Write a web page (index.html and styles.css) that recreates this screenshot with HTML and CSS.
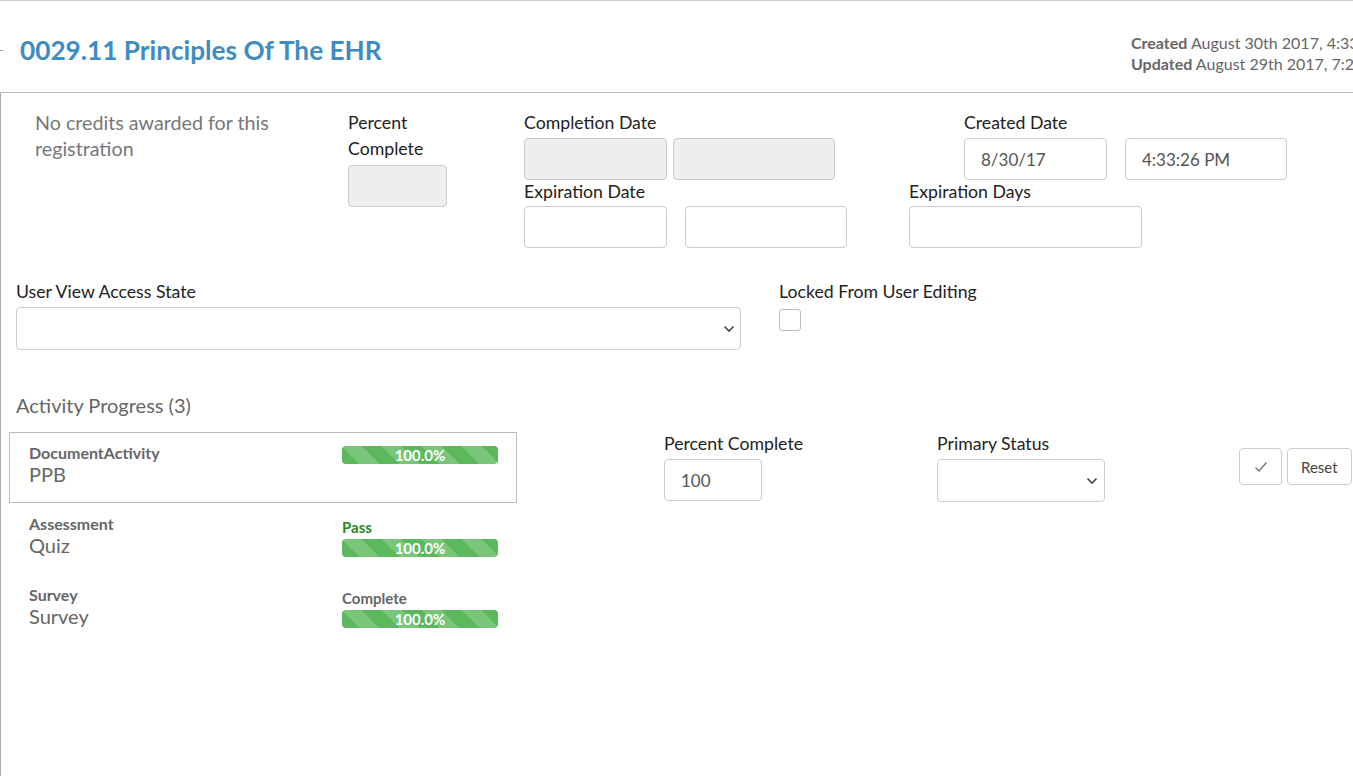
FILE: index.html
```html
<!DOCTYPE html>
<html lang="en">
<head>
    <meta charset="UTF-8">
    <title>0029.11 Principles Of The EHR</title>
    <link rel="stylesheet" href="styles.css">
</head>
<body>
    <div class="panel">
        <div class="panel-header">
            <span class="back-tick"></span>
            <h1 class="title">0029.11 Principles Of The EHR</h1>
            <div class="meta">
                <div><b>Created</b> August 30th 2017, 4:33:26 PM</div>
                <div><b>Updated</b> August 29th 2017, 7:21:04 PM</div>
            </div>
        </div>

        <div class="panel-body">
            <!-- registration fields -->
            <div class="reg-row">
                <div class="col-credits">No credits awarded for this registration</div>

                <div class="col-percent">
                    <label class="label label-wrap">Percent Complete</label>
                    <input class="field field-percent" type="text" disabled>
                </div>

                <div class="col-dates">
                    <label class="label">Completion Date</label>
                    <div class="field-pair tight">
                        <input class="field w-date" type="text" disabled>
                        <input class="field w-time" type="text" disabled>
                    </div>
                    <label class="label label-next">Expiration Date</label>
                    <div class="field-pair">
                        <input class="field w-date" type="text">
                        <input class="field w-time" type="text">
                    </div>
                </div>

                <div class="col-created">
                    <div class="created-group">
                        <label class="label">Created Date</label>
                        <div class="field-pair">
                            <input class="field w-date" type="text" value="8/30/17">
                            <input class="field w-time" type="text" value="4:33:26 PM">
                        </div>
                    </div>
                    <label class="label label-next">Expiration Days</label>
                    <input class="field w-days" type="text">
                </div>
            </div>

            <div class="access-row">
                <div class="access-group">
                    <label class="label">User View Access State</label>
                    <div class="select-wrap w-access">
                        <select class="field select"></select>
                        <svg class="chevron" width="12" height="8" viewBox="0 0 12 8"><polyline points="1.5,1.5 6,6 10.5,1.5" fill="none" stroke="#444" stroke-width="1.6"/></svg>
                    </div>
                </div>
                <div class="locked-group">
                    <label class="label">Locked From User Editing</label>
                    <input class="checkbox" type="checkbox">
                </div>
            </div>

            <h2 class="section-title">Activity Progress (3)</h2>

            <div class="activity-row">
                <div class="activity-list">
                    <div class="activity selected">
                        <div class="activity-name">
                            <div class="activity-type">DocumentActivity</div>
                            <div class="activity-title">PPB</div>
                        </div>
                        <div class="activity-progress">
                            <div class="bar"><span>100.0%</span></div>
                        </div>
                    </div>
                    <div class="activity">
                        <div class="activity-name">
                            <div class="activity-type">Assessment</div>
                            <div class="activity-title">Quiz</div>
                        </div>
                        <div class="activity-progress">
                            <div class="status status-pass">Pass</div>
                            <div class="bar"><span>100.0%</span></div>
                        </div>
                    </div>
                    <div class="activity">
                        <div class="activity-name">
                            <div class="activity-type">Survey</div>
                            <div class="activity-title">Survey</div>
                        </div>
                        <div class="activity-progress">
                            <div class="status">Complete</div>
                            <div class="bar"><span>100.0%</span></div>
                        </div>
                    </div>
                </div>

                <div class="activity-edit">
                    <div class="edit-percent">
                        <label class="label">Percent Complete</label>
                        <input class="field w-pc" type="text" value="100">
                    </div>
                    <div class="edit-status">
                        <label class="label">Primary Status</label>
                        <div class="select-wrap w-status">
                            <select class="field select"></select>
                            <svg class="chevron" width="12" height="8" viewBox="0 0 12 8"><polyline points="1.5,1.5 6,6 10.5,1.5" fill="none" stroke="#444" stroke-width="1.6"/></svg>
                        </div>
                    </div>
                    <div class="edit-buttons">
                        <button class="btn btn-icon" type="button">
                            <svg width="14" height="12" viewBox="0 0 14 12"><polyline points="1.5,6.5 5,10 12.5,1.5" fill="none" stroke="#777" stroke-width="1.4"/></svg>
                        </button>
                        <button class="btn" type="button">Reset</button>
                    </div>
                </div>
            </div>
        </div>
    </div>
</body>
</html>
```

FILE: styles.css
```css
* {
    box-sizing: border-box;
}

body {
    margin: 0;
    font-family: Lato, 'Open Sans', sans-serif;
    color: #333;
    background: #fff;
    overflow: hidden;
}

.panel {
    width: 1353px;
    height: 776px;
    border-top: 1px solid #ccc;
    display: flex;
    flex-direction: column;
}

/* header */
.panel-header {
    height: 92px;
    flex-shrink: 0;
    display: flex;
    align-items: center;
    border-bottom: 1px solid #bbb;
}

.back-tick {
    width: 3px;
    height: 1px;
    background: #999;
    margin-right: 17px;
    margin-top: 8px;
}

.title {
    margin: 6px 0 0 0;
    font-size: 26.2px;
    font-weight: 700;
    color: #3d8cc3;
    flex: 1;
}

.meta {
    align-self: flex-start;
    margin-top: 31px;
    width: 222px;
    white-space: nowrap;
    overflow: hidden;
    font-size: 16px;
    line-height: 21px;
    color: #666;
}

.meta b {
    font-weight: 700;
}

/* body */
.panel-body {
    flex: 1;
    border-left: 1px solid #aaa;
    padding: 18px 0 0 15px;
}

.label {
    display: block;
    font-size: 17.7px;
    line-height: 24px;
    color: #222;
    margin-bottom: 3px;
}

.label-wrap {
    line-height: 26px;
    width: 90px;
}

.label-next {
    margin-top: 0;
    margin-bottom: 2px;
}

.field {
    display: block;
    height: 42px;
    border: 1px solid #ccc;
    border-radius: 4px;
    background: #fff;
    font-family: Lato, 'Open Sans', sans-serif;
    font-size: 17px;
    color: #555;
    padding: 0 16px;
    margin: 0;
}

.field:disabled {
    background: #eee;
}

.reg-row {
    display: flex;
    align-items: flex-start;
}

.col-credits {
    margin-left: 19px;
    width: 313px;
    padding-right: 50px;
    font-size: 19.7px;
    line-height: 26px;
    color: #777;
    margin-top: -1px;
}

.col-percent {
    width: 176px;
    margin-top: -1px;
}

.field-percent {
    width: 99px;
}

.col-dates {
    width: 385px;
}

.field-pair {
    display: flex;
    gap: 18px;
}

.field-pair.tight {
    gap: 6px;
}

.w-date {
    width: 143px;
}

.w-time {
    width: 162px;
}

.col-created {
    flex: 1;
}

.created-group {
    padding-left: 55px;
}

.w-days {
    width: 233px;
}

/* access row */
.access-row {
    display: flex;
    margin-top: 32px;
}

.access-group {
    width: 763px;
}

.select-wrap {
    position: relative;
}

.select {
    width: 100%;
    height: 43px;
    appearance: none;
    -webkit-appearance: none;
}

.chevron {
    position: absolute;
    right: 6px;
    top: 18px;
    pointer-events: none;
}

.w-status .chevron {
    right: 7px;
}

.w-access {
    width: 725px;
}

.checkbox {
    appearance: none;
    -webkit-appearance: none;
    display: block;
    width: 22px;
    height: 22px;
    margin: 5px 0 0 0;
    border: 1px solid #bbb;
    border-radius: 3px;
    background: #fff;
}

.section-title {
    margin: 43px 0 15px 0;
    font-size: 20px;
    font-weight: 400;
    line-height: 24px;
    color: #666;
}

/* activities */
.activity-row {
    display: flex;
    align-items: flex-start;
}

.activity-list {
    width: 508px;
    margin-left: -7px;
}

.activity {
    display: flex;
    height: 71px;
    border: 1px solid transparent;
}

.activity.selected {
    border-color: #bbb;
}

.activity-name {
    width: 332px;
    padding: 10px 0 0 19px;
    color: #666;
}

.activity-type {
    font-size: 16px;
    font-weight: 700;
    line-height: 20px;
}

.activity-title {
    font-size: 20px;
    line-height: 22px;
}

.activity-progress {
    padding-top: 13px;
}

.status {
    font-size: 15px;
    font-weight: 700;
    line-height: 20px;
    color: #666;
    height: 22px;
}

.status-pass {
    color: #1e8a1e;
}

.bar {
    width: 156px;
    height: 18px;
    border-radius: 4px;
    background-color: #5cb85c;
    background-image: linear-gradient(45deg, rgba(255, 255, 255, .18) 25%, transparent 25%, transparent 50%, rgba(255, 255, 255, .18) 50%, rgba(255, 255, 255, .18) 75%, transparent 75%, transparent);
    background-size: 40px 40px;
    text-align: center;
    color: #fff;
    font-size: 15px;
    font-weight: 700;
    line-height: 18px;
}

.activity-edit {
    display: flex;
    align-items: flex-start;
    margin-left: 147px;
}

.edit-percent {
    width: 273px;
}

.w-pc {
    width: 98px;
}

.edit-status {
    width: 302px;
}

.w-status {
    width: 168px;
}

.edit-buttons {
    display: flex;
    gap: 5px;
    margin-top: 16px;
}

.btn {
    height: 37px;
    border: 1px solid #ccc;
    border-radius: 4px;
    background: #fff;
    font-family: Lato, 'Open Sans', sans-serif;
    font-size: 15px;
    color: #444;
    padding: 0 13px;
}

.btn-icon {
    width: 43px;
    padding: 0;
    display: flex;
    align-items: center;
    justify-content: center;
}
```
